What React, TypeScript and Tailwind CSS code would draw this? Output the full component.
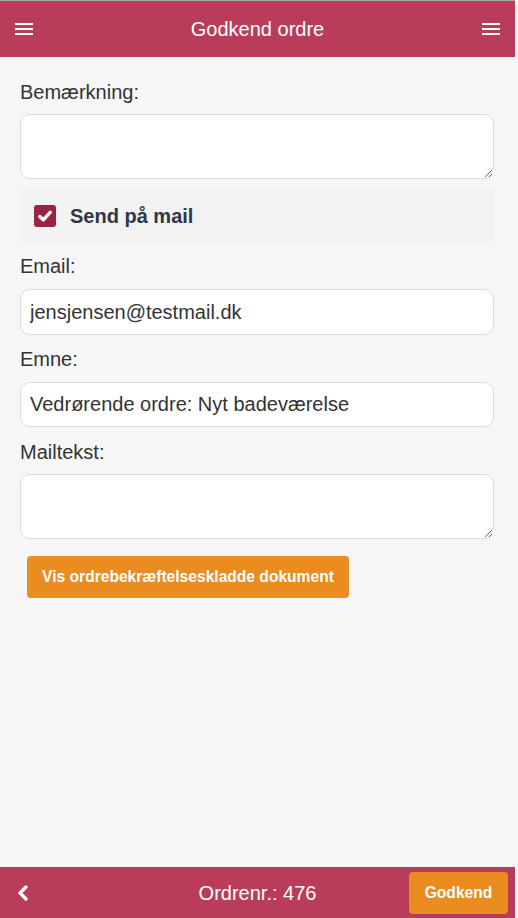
import React from 'react';

const FONT = { fontFamily: '"Liberation Sans", Arial, sans-serif' };

function Burger() {
  return (
    <div className="flex flex-col gap-[3px] w-[18px]">
      <span className="block h-[2px] bg-white" />
      <span className="block h-[2px] bg-white" />
      <span className="block h-[2px] bg-white" />
    </div>
  );
}

function Label({ children, mt }: { children: React.ReactNode; mt: string }) {
  return <div className={`${mt} text-[20px] leading-[20px] text-[#333]`}>{children}</div>;
}

export default function App() {
  return (
    <div className="w-[518px] h-[918px] bg-[#f6f6f6] flex flex-col" style={FONT}>
      <header className="w-[515px] h-[57px] bg-[#b93d5a] border-t border-[#a5a5a5] flex items-center justify-between px-[15px]">
        <Burger />
        <h1 className="text-[20px] text-white">Godkend ordre</h1>
        <Burger />
      </header>

      <main className="w-[515px] flex-1 flex flex-col pl-5 pr-[21px]">
        <Label mt="mt-[25px]">Bemærkning:</Label>
        <textarea className="mt-[12px] h-[65px] rounded-[10px] border border-[#dcdcdc] bg-white resize-y outline-none" />

        <div className="mt-[9px] h-[55px] bg-[#f2f2f2] rounded-[4px] flex items-center pl-[14px] gap-[14px]">
          <span className="w-[22px] h-[22px] rounded-[3px] bg-[#9c2443] flex items-center justify-center">
            <svg width="16" height="16" viewBox="0 0 16 16">
              <path d="M2.8 8.6 L6.3 11.8 L13.2 4.4" fill="none" stroke="white" strokeWidth="3.4" strokeLinecap="round" strokeLinejoin="round" />
            </svg>
          </span>
          <span className="text-[20px] font-bold text-[#2d3844]">Send på mail</span>
        </div>

        <Label mt="mt-[13px]">Email:</Label>
        <input
          readOnly
          value="jensjensen@testmail.dk"
          className="mt-[13px] h-[46px] rounded-[10px] border border-[#dcdcdc] bg-white px-[9px] text-[20px] text-[#333] outline-none"
        />

        <Label mt="mt-[14px]">Emne:</Label>
        <input
          readOnly
          value="Vedrørende ordre: Nyt badeværelse"
          className="mt-[13px] h-[45px] rounded-[10px] border border-[#dcdcdc] bg-white px-[9px] text-[20px] text-[#333] outline-none"
        />

        <Label mt="mt-[15px]">Mailtekst:</Label>
        <textarea className="mt-[12px] h-[65px] rounded-[10px] border border-[#dcdcdc] bg-white resize-y outline-none" />

        <button className="mt-[17px] ml-[7px] w-[322px] h-[42px] rounded-[4px] bg-[#ea8c1f] text-white font-bold text-[15.6px] text-center self-start">
          Vis ordrebekræftelseskladde dokument
        </button>
      </main>

      <footer className="w-[515px] h-[51px] bg-[#b93d5a] flex items-center pl-[17px] pr-[7px]">
        <svg width="12" height="16" viewBox="0 0 12 16" className="shrink-0">
          <path d="M9 2 L3 8 L9 14" fill="none" stroke="white" strokeWidth="3.2" strokeLinecap="round" strokeLinejoin="round" />
        </svg>
        <div className="flex-1 text-center text-white text-[20px] pl-[77px]">Ordrenr.: 476</div>
        <button className="w-[99px] h-[42px] rounded-[4px] bg-[#ea8c1f] text-white font-bold text-[15.6px]">Godkend</button>
      </footer>
    </div>
  );
}
